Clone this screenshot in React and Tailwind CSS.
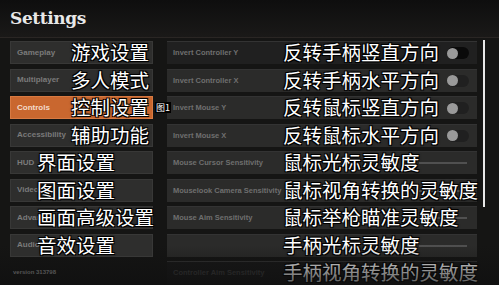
import React from 'react';

const cjk = { fontFamily: '"Noto Sans CJK SC", "Noto Sans", sans-serif' };
const outline = '[text-shadow:1px_1px_0_#000,-1px_-1px_0_#000,1px_-1px_0_#000,-1px_1px_0_#000,0_0_3px_#000]';

const menu = [
  { en: 'Gameplay', zh: '游戏设置', zx: 'left-[60px]' },
  { en: 'Multiplayer', zh: '多人模式', zx: 'left-[60px]' },
  { en: 'Controls', zh: '控制设置', zx: 'left-[60px]', active: true },
  { en: 'Accessibility', zh: '辅助功能', zx: 'left-[60px]' },
  { en: 'HUD', zh: '界面设置', zx: 'left-[26px]' },
  { en: 'Video', zh: '图面设置', zx: 'left-[26px]' },
  { en: 'Advanced', zh: '画面高级设置', zx: 'left-[26px]' },
  { en: 'Audio', zh: '音效设置', zx: 'left-[26px]' },
];

const rows = [
  { en: 'Invert Controller Y', zh: '反转手柄竖直方向', kind: 'toggle', dark: true },
  { en: 'Invert Controller X', zh: '反转手柄水平方向', kind: 'toggle' },
  { en: 'Invert Mouse Y', zh: '反转鼠标竖直方向', kind: 'toggle' },
  { en: 'Invert Mouse X', zh: '反转鼠标水平方向', kind: 'toggle' },
  { en: 'Mouse Cursor Sensitivity', zh: '鼠标光标灵敏度', kind: 'slider' },
  { en: 'Mouselook Camera Sensitivity', zh: '鼠标视角转换的灵敏度', kind: 'slider' },
  { en: 'Mouse Aim Sensitivity', zh: '鼠标举枪瞄准灵敏度', kind: 'slider' },
  { en: '', zh: '手柄光标灵敏度', kind: 'slider' },
  { en: 'Controller Aim Sensitivity', zh: '手柄视角转换的灵敏度', kind: 'none', faded: true },
];

function Toggle({ dark }) {
  return (
    <div className={`ml-auto mr-[8px] flex items-center h-[12px] w-[22px] rounded-full ${dark ? 'bg-[#0a0a0a]' : 'bg-[#202020]'}`}>
      <span className="w-[11px] h-[11px] rounded-full bg-[#9a9a9a]" />
    </div>
  );
}

export default function App() {
  return (
    <div className="w-[499px] h-[285px] bg-[#151514] overflow-hidden relative" style={{ fontFamily: '"Liberation Sans", sans-serif' }}>
      {/* header */}
      <div className="h-[38px] pl-[10px] pt-[6px] border-b border-[#2a2624] bg-gradient-to-b from-[#0e0e0e] to-[#1a1918]">
        <h1 className="text-[#e8e8e8] text-[17px] font-bold leading-[24px] tracking-[-0.4px]" style={{ fontFamily: '"DejaVu Serif", serif' }}>
          Settings
        </h1>
      </div>

      <div className="flex pt-[3px]">
        {/* left nav */}
        <div className="relative z-10 w-[143px] ml-[10px] flex flex-col gap-[4.5px] shrink-0">
          {menu.map((m) => (
            <div
              key={m.en}
              className={`relative h-[23px] flex items-center pl-[6px] border ${m.active ? 'bg-[#c9672f] border-[#d87a42]' : 'bg-[#2e2e2d] border-[#383837]'}`}
            >
              <span className={`text-[8px] font-bold ${m.active ? 'text-[#f4dccb]' : 'text-[#7a7a7a]'}`}>{m.en}</span>
              <span className={`absolute ${m.zx} top-[-3px] text-[19.5px] leading-[26px] text-white ${outline} whitespace-nowrap`} style={cjk}>
                {m.zh}
              </span>
              {m.active && (
                <span className="absolute left-[144px] top-[5px] bg-black text-white text-[9px] leading-[11px] px-[1px] whitespace-nowrap" style={cjk}>
                  图1
                </span>
              )}
            </div>
          ))}
          <div className="mt-[7px] pl-[3px] text-[6px] text-[#555] font-bold">version 313798</div>
        </div>

        {/* right list */}
        <div className="ml-[14px] w-[310px] shrink-0 flex flex-col gap-[4.5px]">
          {rows.map((r, i) => (
            <div
              key={i}
              className={`relative h-[23px] flex items-center pl-[6px] ${r.dark ? 'bg-[#202020]' : r.faded ? 'bg-[#181818]' : 'bg-[#2b2b2a]'} border-t border-[#333]`}
            >
              <span className={`text-[7.5px] font-bold ${r.faded ? 'text-[#3c3c3c]' : 'text-[#6f6f6f]'} whitespace-nowrap`}>{r.en}</span>
              {r.kind === 'toggle' && <Toggle dark={r.dark} />}
              {r.kind === 'slider' && (
                <div className="ml-auto mr-[10px] w-[48px] h-[2px] bg-[#505050]" />
              )}
              <span className={`absolute left-[116px] top-[-3px] text-[19.5px] leading-[26px] text-white ${outline} whitespace-nowrap`} style={cjk}>
                {r.zh}
              </span>
            </div>
          ))}
        </div>

        {/* scrollbar */}
        <div className="ml-[6px] mt-[-1px] w-[2px] h-[167px] shrink-0 bg-[#e8e8e8]" />
      </div>

      {/* bottom fade */}
      <div className="absolute left-0 right-0 bottom-0 h-[40px] bg-gradient-to-b from-transparent to-[#0f0f0f]/70 pointer-events-none" />
    </div>
  );
}
